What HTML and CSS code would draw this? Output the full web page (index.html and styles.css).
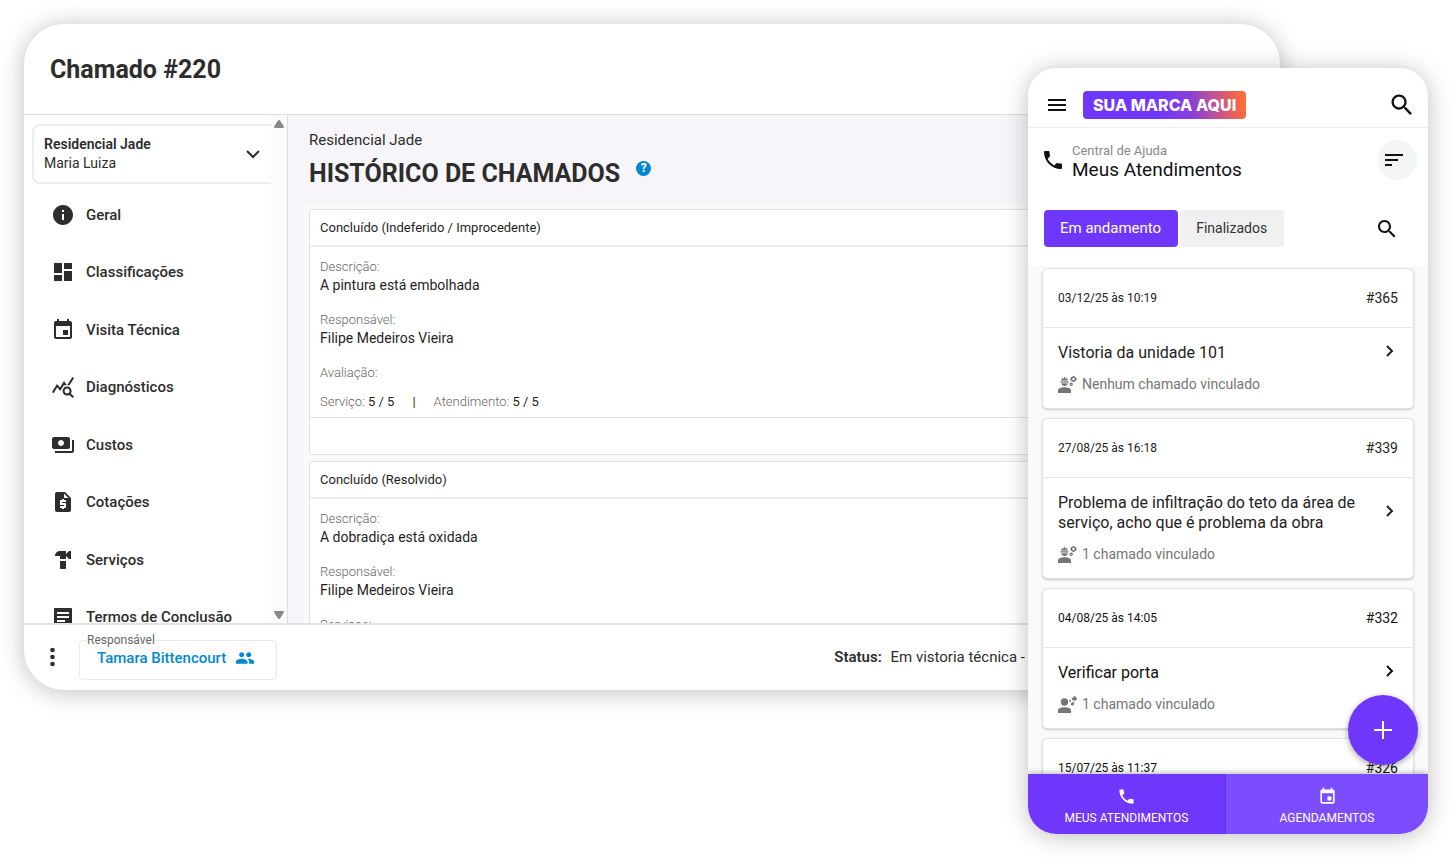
FILE: index.html
```html
<!DOCTYPE html>
<html lang="pt-BR">
<head>
  <meta charset="UTF-8" />
  <meta name="viewport" content="width=device-width, initial-scale=1" />
  <title>Chamado #220</title>
  <link rel="stylesheet" href="styles.css">
</head>
<body>
  <div class="stage">

    <div class="desktop">
      <header class="desktop-header">
        <h1>Chamado #220</h1>
      </header>

      <div class="desktop-body">
        <aside class="sidebar">
          <div class="sidebar-content">
            <button class="client" type="button" aria-haspopup="listbox">
              <span class="client-text">
                <strong>Residencial Jade</strong>
                <span>Maria Luiza</span>
              </span>
              <svg class="icon-small" viewBox="0 0 16 16" fill="none" stroke="currentColor" stroke-width="2"><path d="M2 5l6 6 6-6" /></svg>
            </button>

            <nav class="menu">
              <a href="#"><svg class="icon" viewBox="0 0 24 24"><path d="M12 2C6.48 2 2 6.48 2 12s4.48 10 10 10 10-4.48 10-10S17.52 2 12 2zm1 15h-2v-6h2v6zm0-8h-2V7h2v2z" /></svg>Geral</a>
              <a href="#"><svg class="icon" viewBox="0 0 24 24"><path d="M3 13h8V3H3v10zm0 8h8v-6H3v6zm10 0h8V11h-8v10zm0-18v6h8V3h-8z" /></svg>Classificações</a>
              <a href="#"><svg class="icon" viewBox="0 0 24 24"><path d="M17 12h-5v5h5v-5zM16 1v2H8V1H6v2H5c-1.11 0-1.99.9-1.99 2L3 19c0 1.1.89 2 2 2h14c1.1 0 2-.9 2-2V5c0-1.1-.9-2-2-2h-1V1h-2zm3 18H5V8h14v11z" /></svg>Visita Técnica</a>
              <a href="#"><svg class="icon" viewBox="0 0 24 24"><path d="M19.88 18.47c.44-.7.7-1.51.7-2.39 0-2.49-2.01-4.5-4.5-4.5s-4.5 2.01-4.5 4.5 2.01 4.5 4.49 4.5c.88 0 1.7-.26 2.39-.7L21.58 23 23 21.58l-3.12-3.11zm-3.8.11c-1.38 0-2.5-1.12-2.5-2.5s1.12-2.5 2.5-2.5 2.5 1.12 2.5 2.5-1.12 2.5-2.5 2.5zM15.72 10.08c-.74.02-1.45.18-2.1.45l-.55-.83-3.8 6.18-3.01-3.52-3.63 5.81L1 17l5-8 3 3.5L13 6l2.72 4.08zm2.59.5c-.64-.28-1.33-.45-2.05-.49L21.38 2 23 3.18l-4.69 7.4z" /></svg>Diagnósticos</a>
              <a href="#"><svg class="icon" viewBox="0 0 24 24"><path d="M19 14V6c0-1.1-.9-2-2-2H3c-1.1 0-2 .9-2 2v8c0 1.1.9 2 2 2h14c1.1 0 2-.9 2-2zm-9-1c-1.66 0-3-1.34-3-3s1.34-3 3-3 3 1.34 3 3-1.34 3-3 3zm13-6v11c0 1.1-.9 2-2 2H4v-2h17V7h2z" /></svg>Custos</a>
              <a href="#"><svg class="icon" viewBox="0 0 24 24"><path d="M14 2H6c-1.1 0-1.99.9-1.99 2L4 20c0 1.1.89 2 1.99 2H18c1.1 0 2-.9 2-2V8l-6-6zm1 10h-4v1h3c.55 0 1 .45 1 1v3c0 .55-.45 1-1 1h-1v1h-2v-1H9v-2h4v-1h-3c-.55 0-1-.45-1-1v-3c0-.55.45-1 1-1h1V9h2v1h2v2zm-2-4V3.5L17.5 8H13z" /></svg>Cotações</a>
              <a href="#"><svg class="icon" viewBox="0 0 24 24"><path d="M18 3l-3 3V3H9C6.24 3 4 5.24 4 8h5v3h6V8l3 3h2V3h-2zM9 13v7c0 .55.45 1 1 1h4c.55 0 1-.45 1-1v-7H9z" /></svg>Serviços</a>
              <a href="#"><svg class="icon" viewBox="0 0 24 24"><path d="M4 3c-.55 0-1 .45-1 1v16c0 .55.45 1 1 1h16c.55 0 1-.45 1-1V4c0-.55-.45-1-1-1H4zm2 4h12v2H6V7zm0 4h12v2H6v-2zm0 4h8v2H6v-2z" /></svg>Termos de Conclusão</a>
            </nav>
          </div>
          <div class="scroll-track">
            <svg class="arrow" viewBox="0 0 10 8"><path d="M5 0c.5 0 .9.3 1.2.7L9.7 6.3C10.2 7.1 9.9 8 9 8H1C.1 8-.2 7.1.3 6.3L3.8.7C4.1.3 4.5 0 5 0z" /></svg>
            <svg class="arrow" viewBox="0 0 10 8"><path d="M5 8c.5 0 .9-.3 1.2-.7L9.7 1.7C10.2.9 9.9 0 9 0H1C.1 0-.2.9.3 1.7L3.8 7.3C4.1 7.7 4.5 8 5 8z" /></svg>
          </div>
        </aside>

        <main class="history">
          <p class="history-client">Residencial Jade</p>
          <div class="history-title">
            <h2>HISTÓRICO DE CHAMADOS</h2>
            <button class="help" type="button" aria-label="Ajuda">?</button>
          </div>

          <div class="history-list">
            <article class="record">
              <h3>Concluído (Indeferido / Improcedente)</h3>
              <div class="record-body">
                <dl>
                  <dt>Descrição:</dt>
                  <dd>A pintura está embolhada</dd>
                  <dt>Responsável:</dt>
                  <dd>Filipe Medeiros Vieira</dd>
                  <dt>Avaliação:</dt>
                </dl>
                <p class="ratings">
                  <span>Serviço: <b>5 / 5</b></span>
                  <b>|</b>
                  <span>Atendimento: <b>5 / 5</b></span>
                </p>
              </div>
              <div class="record-footer"></div>
            </article>

            <article class="record">
              <h3>Concluído (Resolvido)</h3>
              <div class="record-body">
                <dl>
                  <dt>Descrição:</dt>
                  <dd>A dobradiça está oxidada</dd>
                  <dt>Responsável:</dt>
                  <dd>Filipe Medeiros Vieira</dd>
                  <dt>Serviços:</dt>
                </dl>
              </div>
            </article>
          </div>
        </main>
      </div>

      <footer class="desktop-footer">
        <button class="more" type="button" aria-label="Mais opções">
          <svg class="icon" viewBox="0 0 24 24"><circle cx="12.5" cy="5" r="2.3" /><circle cx="12.5" cy="12" r="2.3" /><circle cx="12.5" cy="19" r="2.3" /></svg>
        </button>
        <fieldset class="owner">
          <legend>Responsável</legend>
          <button type="button">
            Tamara Bittencourt
            <svg class="icon-people" viewBox="0 0 24 24"><path d="M16.5 11c1.66 0 2.99-1.34 2.99-3s-1.33-3-2.99-3-3 1.34-3 3 1.34 3 3 3zM8 11c1.66 0 2.99-1.34 2.99-3S9.66 5 8 5 5 6.34 5 8s1.34 3 3 3zM8 13c-2.33 0-7 1.17-7 3.5V19h14v-2.5C15 14.17 10.33 13 8 13zM16 13c-.29 0-.62.02-.97.05C16.19 13.89 17 15.02 17 16.5V19h6v-2.5c0-2.33-4.67-3.5-7-3.5z" /></svg>
          </button>
        </fieldset>
        <p class="status"><strong>Status:</strong> Em vistoria técnica -</p>
      </footer>
    </div>

    <div class="phone">
      <header class="phone-header">
        <button class="icon-button" type="button" aria-label="Menu">
          <svg class="icon" viewBox="0 0 24 24"><path d="M3 18h18v-2H3v2zm0-5h18v-2H3v2zm0-7v2h18V6H3z" /></svg>
        </button>
        <span class="brand">SUA MARCA AQUI</span>
        <button class="icon-button push" type="button" aria-label="Buscar">
          <svg class="icon-large" viewBox="0 0 24 24"><path d="M15.5 14h-.79l-.28-.27C15.41 12.59 16 11.11 16 9.5 16 5.91 13.09 3 9.5 3S3 5.91 3 9.5 5.91 16 9.5 16c1.61 0 3.09-.59 4.23-1.57l.27.28v.79l5 4.99L20.49 19l-4.99-5zm-6 0C7.01 14 5 11.99 5 9.5S7.01 5 9.5 5 14 7.01 14 9.5 11.99 14 9.5 14z" /></svg>
        </button>
      </header>

      <div class="phone-title">
        <svg class="icon" viewBox="0 0 24 24"><path d="M6.62 10.79c1.44 2.83 3.76 5.14 6.59 6.59l2.2-2.2c.27-.27.67-.36 1.02-.24 1.12.37 2.33.57 3.57.57.55 0 1 .45 1 1V20c0 .55-.45 1-1 1-9.39 0-17-7.61-17-17 0-.55.45-1 1-1h3.5c.55 0 1 .45 1 1 0 1.25.2 2.45.57 3.57.11.35.03.74-.25 1.02l-2.2 2.2z" /></svg>
        <div class="phone-title-text">
          <p>Central de Ajuda</p>
          <h2>Meus Atendimentos</h2>
        </div>
        <button class="sort" type="button" aria-label="Ordenar">
          <svg class="icon" viewBox="0 0 24 24"><path d="M3 6h18v2H3zM3 11h13v2H3zM3 16h7v2H3z" /></svg>
        </button>
      </div>

      <div class="tabs">
        <button class="tab active" type="button">Em andamento</button>
        <button class="tab" type="button">Finalizados</button>
        <button class="icon-button push" type="button" aria-label="Buscar atendimento">
          <svg class="icon" viewBox="0 0 24 24"><path d="M15.5 14h-.79l-.28-.27C15.41 12.59 16 11.11 16 9.5 16 5.91 13.09 3 9.5 3S3 5.91 3 9.5 5.91 16 9.5 16c1.61 0 3.09-.59 4.23-1.57l.27.28v.79l5 4.99L20.49 19l-4.99-5zm-6 0C7.01 14 5 11.99 5 9.5S7.01 5 9.5 5 14 7.01 14 9.5 11.99 14 9.5 14z" /></svg>
        </button>
      </div>

      <div class="tickets">
        <article class="ticket">
          <div class="ticket-head"><time>03/12/25 às 10:19</time><span>#365</span></div>
          <div class="ticket-body">
            <div class="ticket-row">
              <h3>Vistoria da unidade 101</h3>
              <svg class="icon-small" viewBox="0 0 16 16" fill="none" stroke="currentColor" stroke-width="2"><path d="M5 1l5 5-5 5" /></svg>
            </div>
            <p class="linked"><svg class="icon-worker" viewBox="0 0 20 18"><use href="#worker" /></svg>Nenhum chamado vinculado</p>
          </div>
        </article>

        <article class="ticket">
          <div class="ticket-head"><time>27/08/25 às 16:18</time><span>#339</span></div>
          <div class="ticket-body">
            <div class="ticket-row">
              <h3>Problema de infiltração do teto da área de serviço, acho que é problema da obra</h3>
              <svg class="icon-small" viewBox="0 0 16 16" fill="none" stroke="currentColor" stroke-width="2"><path d="M5 1l5 5-5 5" /></svg>
            </div>
            <p class="linked"><svg class="icon-worker" viewBox="0 0 20 18"><use href="#worker" /></svg>1 chamado vinculado</p>
          </div>
        </article>

        <article class="ticket strong">
          <div class="ticket-head"><time>04/08/25 às 14:05</time><span>#332</span></div>
          <div class="ticket-body">
            <div class="ticket-row">
              <h3>Verificar porta</h3>
              <svg class="icon-small" viewBox="0 0 16 16" fill="none" stroke="currentColor" stroke-width="2"><path d="M5 1l5 5-5 5" /></svg>
            </div>
            <p class="linked"><svg class="icon-worker" viewBox="0 0 20 18"><use href="#person" /></svg>1 chamado vinculado</p>
          </div>
        </article>

        <article class="ticket strong">
          <div class="ticket-head"><time>15/07/25 às 11:37</time><span>#326</span></div>
        </article>
      </div>

      <button class="fab" type="button" aria-label="Novo atendimento">
        <svg class="icon" viewBox="0 0 24 24"><path d="M11 3h2v8h8v2h-8v8h-2v-8H3v-2h8z" /></svg>
      </button>

      <nav class="phone-nav">
        <a class="current" href="#">
          <svg class="icon-nav" viewBox="0 0 24 24"><path d="M6.62 10.79c1.44 2.83 3.76 5.14 6.59 6.59l2.2-2.2c.27-.27.67-.36 1.02-.24 1.12.37 2.33.57 3.57.57.55 0 1 .45 1 1V20c0 .55-.45 1-1 1-9.39 0-17-7.61-17-17 0-.55.45-1 1-1h3.5c.55 0 1 .45 1 1 0 1.25.2 2.45.57 3.57.11.35.03.74-.25 1.02l-2.2 2.2z" /></svg>
          MEUS ATENDIMENTOS
        </a>
        <a href="#">
          <svg class="icon-nav" viewBox="0 0 24 24"><path d="M17 12h-5v5h5v-5zM16 1v2H8V1H6v2H5c-1.11 0-1.99.9-1.99 2L3 19c0 1.1.89 2 2 2h14c1.1 0 2-.9 2-2V5c0-1.1-.9-2-2-2h-1V1h-2zm3 18H5V8h14v11z" /></svg>
          AGENDAMENTOS
        </a>
      </nav>
    </div>
  </div>

  <svg class="symbols" aria-hidden="true">
    <symbol id="worker" viewBox="0 0 20 18">
      <path d="M0 18v-2.500c0-2 3-3.200 6.500-3.200S13 13.500 13 15.500V18z" />
      <path d="M2.500 6.200h8v1.200h-8zM3.200 5.500c0-1.600 1-2.600 2.200-3v1.500H6V2h1v2h.6V2.500c1.200.4 2.200 1.400 2.200 3zM3.300 8.200h6.400C9.500 9.900 8.200 11 6.500 11S3.500 9.900 3.300 8.200z" />
      <circle cx="15.500" cy="4" r="2" fill="none" stroke="currentColor" stroke-width="1.600" />
      <path d="M15 .7h1v1h-1zM15 6.300h1v1h-1zM12.200 3.500h1v1h-1zM17.800 3.500h1v1h-1z" />
      <circle cx="13.200" cy="9.200" r="1.100" fill="none" stroke="currentColor" stroke-width="1.200" />
    </symbol>
    <symbol id="person" viewBox="0 0 20 18">
      <path d="M0 18v-2.500c0-2 3-3.200 6.500-3.200S13 13.500 13 15.500V18z" />
      <circle cx="6.500" cy="7" r="3.700" />
      <path d="M13.500 2.500l1.500.5 1-2 1.500.5.5 1.300 1-.3-.3 2-1.700 1.500-1.200-.8-1.300.5-.2-1.500zM11.500 4l1.200 1-.2 2.500-1-.5zM13 8.500l2-1.500 1.500.5-1 1.500.7 1-1.700.5-1.500-.5z" />
    </symbol>
  </svg>
</body>
</html>
```

FILE: styles.css
```css
* {
  box-sizing: border-box;
}

body {
  margin: 0;
  font-family: Roboto, "Noto Sans", sans-serif;
  background: #fff;
  color: #2d2d2d;
}

h1, h2, h3, p, dl, dd {
  margin: 0;
}

a {
  color: inherit;
  text-decoration: none;
}

button {
  padding: 0;
  border: 0;
  background: none;
  color: inherit;
  font-family: inherit;
  cursor: pointer;
}

svg {
  display: block;
  flex-shrink: 0;
  fill: currentColor;
}

svg[fill="none"] {
  fill: none;
}

.symbols {
  position: absolute;
  width: 0;
  height: 0;
}

.icon {
  width: 24px;
  height: 24px;
}

.icon-small {
  width: 16px;
  height: 16px;
}

.icon-large {
  width: 28px;
  height: 28px;
}

.stage {
  position: relative;
  min-height: 100vh;
  padding: 24px 172px 168px 24px;
}

/* Desktop window */

.desktop {
  display: flex;
  flex-direction: column;
  height: calc(100vh - 192px);
  overflow: hidden;
  background: #fff;
  border-radius: 40px;
  box-shadow: 0 2px 24px rgba(0, 0, 0, 0.26);
}

.desktop-header {
  display: flex;
  align-items: center;
  height: 91px;
  padding: 1px 26px 0;
  border-bottom: 1px solid #dcdcdc;
}

h1,
.history-title h2 {
  font-size: 25px;
  line-height: 32px;
  font-weight: 700;
}

.desktop-body {
  display: flex;
  flex: 1;
  min-height: 0;
  overflow: hidden;
}

.sidebar {
  display: flex;
  width: 264px;
  border-right: 1px solid #dcdbe0;
}

.sidebar-content {
  display: flex;
  flex: 1;
  flex-direction: column;
  padding: 9px 0 0 8px;
}

.client {
  display: flex;
  align-items: center;
  justify-content: space-between;
  padding: 9px 10px;
  border: 2px solid #eee;
  border-right: 0;
  border-radius: 8px 0 0 8px;
  font-size: 14px;
  line-height: 19px;
  text-align: left;
}

.client-text {
  display: flex;
  flex-direction: column;
}

.client strong {
  font-weight: 600;
}

.menu {
  display: flex;
  flex: 1;
  flex-direction: column;
  margin: 2px 0 -23px;
}

.menu a {
  display: flex;
  flex: 1;
  align-items: center;
  gap: 11px;
  padding-left: 19px;
  font-size: 15px;
  font-weight: 500;
}

.scroll-track {
  display: flex;
  flex-direction: column;
  align-items: center;
  justify-content: space-between;
  width: 16px;
  padding: 5px 0 4px;
  background: #fbfbfb;
  color: #888;
}

.arrow {
  width: 10px;
  height: 8px;
}

.history {
  flex: 1;
  padding: 15px 16px 0;
  background: #f7f5f9;
}

.history-client {
  padding-left: 5px;
  font-size: 15px;
  line-height: 20px;
}

.history-title {
  display: flex;
  gap: 16px;
  padding: 8px 5px 15px;
}

.help {
  width: 15px;
  height: 15px;
  margin-top: 3px;
  border-radius: 50%;
  background: #0288d1;
  color: #fff;
  font-size: 12px;
  line-height: 15px;
  font-weight: 700;
}

.history-list {
  display: flex;
  flex-direction: column;
  gap: 6px;
  padding: 4px 5px;
  background: #fafafa;
}

.record {
  border: 1px solid #e2e2e2;
  border-radius: 4px;
  background: #fff;
  color: #1f1f1f;
  font-size: 13px;
  line-height: 19px;
}

.record h3 {
  padding: 8px 10px;
  border-bottom: 2px solid #eee;
  font-size: 13px;
  line-height: 19px;
  font-weight: 400;
}

.record-body {
  padding: 10px 10px 6px;
}

.record dt,
.ratings {
  color: #666;
  font-weight: 300;
}

.record dd {
  margin-bottom: 15px;
  font-size: 14px;
}

.ratings {
  display: flex;
  gap: 18px;
  padding-top: 10px;
}

.ratings b {
  color: #1f1f1f;
  font-weight: 400;
}

.record-footer {
  height: 37px;
  border-top: 1px solid #e2e2e2;
}

.desktop-footer {
  display: flex;
  align-items: center;
  height: 67px;
  padding: 0 255px 2px 16px;
  border-top: 2px solid #e2e2e2;
}

.owner {
  margin: 0 0 0 15px;
  padding: 0 21px 10px 7px;
  border: 1px solid #ebebeb;
  border-radius: 4px;
}

.owner legend {
  padding: 0;
  color: #666;
  font-size: 12px;
  line-height: 14px;
}

.owner button {
  display: flex;
  align-items: center;
  gap: 9px;
  padding-left: 10px;
  color: #0288d1;
  font-size: 15px;
  line-height: 22px;
  font-weight: 500;
}

.icon-people {
  width: 20px;
  height: 20px;
}

.status {
  margin-left: auto;
  font-size: 15px;
  line-height: 20px;
}

.status strong {
  margin-right: 5px;
  font-weight: 600;
}

/* Phone */

.phone {
  position: absolute;
  top: 68px;
  right: 24px;
  bottom: 24px;
  display: flex;
  flex-direction: column;
  width: 400px;
  overflow: hidden;
  border-radius: 28px;
  background: #fff;
  box-shadow: 0 2px 24px rgba(0, 0, 0, 0.26);
  color: #111;
}

.push {
  margin-left: auto;
}

.phone-header {
  display: flex;
  align-items: center;
  height: 60px;
  padding: 14px 12px 0 17px;
  border-bottom: 1px solid #eee;
}

.brand {
  margin-left: 14px;
  padding: 0 10px;
  border-radius: 4px;
  background: linear-gradient(80deg, #6f36fc 0%, #6f36fc 45%, #8a3fd8 66%, #ff6a3d 97%);
  color: #fff;
  font-family: Inter, "Open Sans", sans-serif;
  font-size: 16px;
  line-height: 28px;
  font-weight: 800;
}

.phone-title {
  display: flex;
  align-items: center;
  padding: 12px 11px 12px 13px;
}

.phone-title-text {
  margin-left: 7px;
  padding-top: 2px;
}

.phone-title p {
  color: #888;
  font-size: 13px;
  line-height: 18px;
}

.phone-title h2 {
  font-size: 19px;
  line-height: 20px;
  font-weight: 400;
}

.sort {
  display: flex;
  align-items: center;
  justify-content: center;
  width: 40px;
  height: 40px;
  margin-left: auto;
  padding-right: 7px;
  border-radius: 50%;
  background: #f4f5f7;
}

.tabs {
  display: flex;
  align-items: center;
  gap: 2px;
  padding: 18px 29px 19px 16px;
}

.tab {
  padding: 0 17px 0 16px;
  border-radius: 4px;
  background: #f0f0f0;
  color: #333;
  font-size: 14px;
  line-height: 37px;
}

.tab.active {
  background: #6f36fc;
  color: #fff;
  font-size: 15px;
}

.tickets {
  display: flex;
  flex: 1;
  flex-direction: column;
  gap: 9px;
  min-height: 0;
  padding: 2px 14px 0;
  overflow: hidden;
  background: #fafafa;
}

.ticket {
  flex-shrink: 0;
  border: 1px solid #e2e2e2;
  border-radius: 5px;
  background: #fff;
  box-shadow: 0 1px 2px rgba(0, 0, 0, 0.2);
  color: #222;
}

.ticket.strong {
  color: #111;
}

.ticket-head {
  display: flex;
  align-items: center;
  justify-content: space-between;
  height: 59px;
  padding: 0 15px 1px;
  border-bottom: 1px solid #e6e6e6;
  font-size: 14px;
}

.ticket-head time {
  font-size: 12px;
}

.ticket-body {
  padding: 15px 15px 14px;
}

.ticket-row {
  display: flex;
  align-items: center;
  justify-content: space-between;
}

.ticket-row h3 {
  font-size: 16px;
  line-height: 20px;
  font-weight: 400;
}

.linked {
  display: flex;
  align-items: center;
  gap: 4px;
  padding-top: 11px;
  color: #757575;
  font-size: 14px;
  line-height: 20px;
}

.icon-worker {
  width: 20px;
  height: 18px;
}

.fab {
  position: absolute;
  right: 10px;
  bottom: 69px;
  display: flex;
  align-items: center;
  justify-content: center;
  width: 70px;
  height: 70px;
  border-radius: 50%;
  background: #6f36fc;
  box-shadow: 0 2px 6px rgba(0, 0, 0, 0.35);
  color: #fff;
}

.phone-nav {
  position: relative;
  display: flex;
  height: 60px;
  box-shadow: 0 -1px 6px rgba(0, 0, 0, 0.3);
}

.phone-nav a {
  display: flex;
  flex: 1;
  flex-direction: column;
  align-items: center;
  justify-content: center;
  gap: 3px;
  padding-top: 6px;
  background: #7c4dff;
  color: #fff;
  font-size: 12px;
  line-height: 18px;
}

.phone-nav .current {
  flex: 0 0 198px;
  border-right: 1px solid #6330e0;
  background: #6f36fc;
}

.icon-nav {
  width: 19px;
  height: 19px;
}
```
